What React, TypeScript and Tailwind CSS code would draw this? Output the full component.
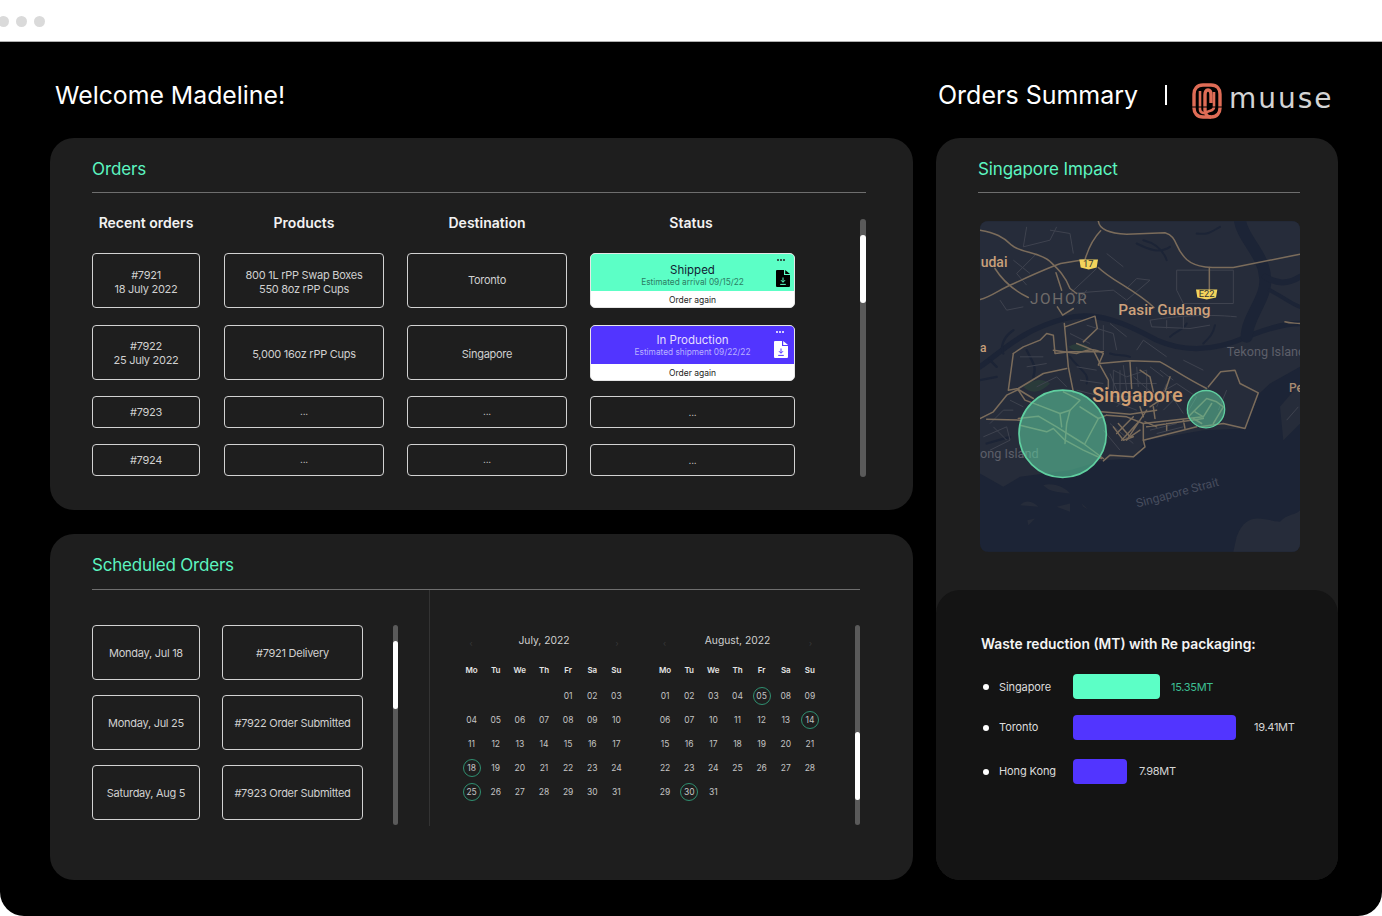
import React from "react";

const FONT = "font-['Inter','Liberation_Sans',sans-serif]";

function Box({ h, className = "", children }: { h: string; className?: string; children?: React.ReactNode }) {
  return (
    <div className={`${h} ${className} flex flex-col items-center justify-center rounded-[4px] border border-[#d2d2d2] text-center text-[11px] leading-[14px] tracking-[-0.27px] text-[#d0d0d0]`}>
      {children}
    </div>
  );
}

function Scrollbar({ w, h, mt, thumb }: { w: string; h: string; mt: string; thumb: string }) {
  return (
    <div className={`${w} ${h} shrink-0 overflow-hidden rounded-full bg-[#5a5a5a]`}>
      <div className={`${mt} ${thumb} w-full rounded-full bg-white`} />
    </div>
  );
}

function FileIcon({ fill, arrow, className }: { fill: string; arrow: string; className: string }) {
  return (
    <svg viewBox="0 0 14 17" className={className}>
      <path d="M0 1a1 1 0 0 1 1-1h7v5h6v11a1 1 0 0 1-1 1H1a1 1 0 0 1-1-1Z" fill={fill} />
      <path d="M9.2 0 14 4H9.2Z" fill={fill} />
      <path d="M7 7.5V12M5 10.2 7 12.3 9 10.2M4.2 14.4H9.8" fill="none" stroke={arrow} strokeWidth="1" />
    </svg>
  );
}

function Dots({ className }: { className: string }) {
  return (
    <div className={`absolute top-[5px] flex gap-[1px] ${className}`}>
      <span className="h-[2px] w-[2px] rounded-full bg-current" />
      <span className="h-[2px] w-[2px] rounded-full bg-current" />
      <span className="h-[2px] w-[2px] rounded-full bg-current" />
    </div>
  );
}

function StatusCard({ title, sub, color, h, tone, subTone, fileFill, arrow, fileClass, dotTone, pad }: {
  title: string; sub: string; color: string; h: string; tone: string; subTone: string; fileFill: string; arrow: string; fileClass: string; dotTone: string; pad: string;
}) {
  return (
    <div className={`relative flex ${h} flex-col overflow-hidden rounded-[5px] border border-[#e6e6e6] bg-white`}>
      <div className={`flex flex-1 flex-col items-center justify-center ${color} ${pad}`}>
        <div className={`text-[11.5px] leading-[13px] ${tone}`}>{title}</div>
        <div className={`text-[8.3px] leading-[11px] ${subTone}`}>{sub}</div>
      </div>
      <div className="flex h-[16px] items-center justify-center pt-[2px] text-[8.5px] text-[#222]">Order again</div>
      <Dots className={dotTone} />
      <FileIcon fill={fileFill} arrow={arrow} className={fileClass} />
    </div>
  );
}

const july = [
  ["", "", "", "", "01", "02", "03"],
  ["04", "05", "06", "07", "08", "09", "10"],
  ["11", "12", "13", "14", "15", "16", "17"],
  ["18", "19", "20", "21", "22", "23", "24"],
  ["25", "26", "27", "28", "29", "30", "31"],
];
const august = [
  ["01", "02", "03", "04", "05", "08", "09"],
  ["06", "07", "10", "11", "12", "13", "14"],
  ["15", "16", "17", "18", "19", "20", "21"],
  ["22", "23", "24", "25", "26", "27", "28"],
  ["29", "30", "31", "", "", "", ""],
];
const days = ["Mo", "Tu", "We", "Th", "Fr", "Sa", "Su"];

function Calendar({ title, rows, marked }: { title: string; rows: string[][]; marked: string[] }) {
  return (
    <div className="w-[169px] shrink-0">
      <div className="flex h-[20px] items-center justify-between px-[10px] text-[10.3px] text-[#d0d0d0]">
        <span className="mt-[4px] text-[8px] text-[#3a3a3a]">‹</span>
        <span>{title}</span>
        <span className="mt-[4px] text-[8px] text-[#3a3a3a]">›</span>
      </div>
      <div className="mt-[9px] grid h-[20px] grid-cols-7 items-center text-center text-[8px] font-semibold text-[#e4e4e4]">
        {days.map((d) => <span key={d}>{d}</span>)}
      </div>
      <div className="mt-[4px] grid grid-cols-7 text-[8.5px] text-[#c4c4c4]">
        {rows.flat().map((d, i) => (
          <div key={i} className="flex h-[24px] items-center justify-center">
            {d && (
              <span className={`flex h-[18px] w-[18px] items-center justify-center rounded-full ${marked.includes(d) ? "border border-[#2f8f70]" : ""}`}>{d}</span>
            )}
          </div>
        ))}
      </div>
    </div>
  );
}

function MapArt() {
  const major = [
    "M385,33 C388,58 420,70 470,72 L585,68 C625,80 610,110 650,148 C680,175 730,173 790,172 L990,132",
    "M718,172 V240",
    "M30,60 C75,68 100,80 125,105 C150,128 205,125 238,152 C262,175 285,195 300,235 L320,250",
    "M392,62 C365,90 352,125 345,148 L272,160 C220,178 165,205 118,226 C90,238 60,262 30,268",
    "M385,172 C425,212 490,235 552,292",
    "M75,175 C100,215 130,240 175,262",
    "M258,188 L275,240",
    "M262,290 L278,315 L310,295 M283,340 L295,470 L310,545",
    "M130,430 L115,540 L145,535 L220,490 L290,475",
    "M130,430 L160,410 L210,390 L230,370 L250,375 L255,430 L300,425 L400,425",
    "M30,625 L70,605 L110,555 L145,538 L190,565",
    "M50,627 L150,630",
    "M320,400 L370,420 L390,460 L480,452 L570,455 C600,470 640,500 710,535",
    "M390,465 L415,510 L415,535",
    "M480,455 L485,535",
    "M510,480 L540,500 L550,545",
    "M285,350 L375,318 L382,355 L340,395",
    "M250,420 L320,430 C350,420 370,410 400,430 L385,465",
    "M395,605 L480,612 L560,600",
    "M410,615 L470,620 L520,640 L700,620",
    "M520,690 L680,650",
    "M520,640 L520,690 L525,710 L490,740 L420,735 L400,752",
    "M440,670 L490,620 M455,690 L510,630 M470,690 L530,600",
    "M430,650 L460,690 L490,680 M445,640 L480,680 L510,660",
    "M530,650 L700,625 M590,640 V660 M640,630 L645,655 M525,635 L560,650",
    "M715,530 L752,485 L795,480 L810,520 L865,548 L825,655 L760,640 L690,650",
    "M600,500 L585,545 M540,590 L570,570 M510,590 L520,620 M550,590 L555,625",
    "M945,335 C960,340 975,338 990,340",
    "M145,540 L165,570 L205,585",
  ];
  const inner = [
    "M145,625 L205,618 L260,650 L340,700 L400,745",
    "M150,645 L230,665 L250,655 L285,690 L340,720 L395,745",
    "M205,585 L270,610 L300,600 L330,570 L280,545",
    "M300,600 L290,640 L285,700",
    "M330,590 L385,625 L345,700",
    "M385,625 L410,615",
    "M270,610 L275,650",
    "M655,620 L710,565 L740,575 L760,590 L730,640",
    "M675,605 L700,620 L725,580 M670,625 L695,640",
  ];
  const minor = [
    "M170,50 L160,110 L240,90 L260,50 M200,130 L140,190 L170,225 M240,60 L300,70 L310,130 M130,150 L180,190 M90,270 L110,300 L160,290",
    "M380,175 L300,250 L430,240 L470,270 L540,210 L500,205 L470,235",
    "M620,180 H790 V280 H640 L620,240 Z M540,330 C600,320 700,310 800,320 M540,330 L545,350 L660,355 L720,345",
    "M590,330 V355 M640,320 V355 M410,130 L460,170 M350,240 L320,280",
    "M350,345 L430,370 L440,420 M400,345 V420 M300,370 L360,400 M420,340 L470,380",
    "M430,480 L470,500 L530,480 L530,560 L430,560 Z M450,480 V580 M430,520 H560 M490,500 L560,560 M570,480 L610,510",
    "M500,420 L520,390 L590,440 M640,450 L700,480 M420,490 L440,540 M460,465 L470,540 M500,470 L505,530 M540,470 L580,500",
    "M550,560 L620,520 L680,560 L650,610 M600,550 L640,610 M590,520 L560,590 M620,560 L580,600",
    "M40,680 L110,650 L120,690 L60,720 M60,640 L100,600 L130,600 M120,570 L160,590 M70,650 L110,690",
    "M200,530 L260,500 L290,530 M170,470 L230,460 M150,440 L220,440 M320,470 L380,480 M330,510 L400,520 M320,540 L400,560",
    "M950,630 L985,590 M770,540 L745,600",
    "M420,640 L490,700 M400,660 L450,720 M540,660 L620,640 M560,670 L640,650",
    "M420,570 L500,600 M440,590 L470,560",
  ];
  return (
    <svg viewBox="30 33 960 992" className="h-[331px] w-[320px] rounded-[8px]" fontFamily="Roboto, sans-serif">
      <rect x="30" y="33" width="960" height="992" fill="#1c2436" />
      <path d="M30,33 H990 V470 L900,520 L868,550 L825,655 L700,660 L530,690 L490,745 L400,750 L300,780 L150,800 L100,830 L30,790 Z" fill="#262c3a" />
      <path d="M800,980 C830,900 880,930 930,935 C950,910 980,915 990,900 V1025 H790 Z" fill="#262c3a" />
      <path d="M150,885 C170,865 190,875 205,890 Z M220,825 C250,815 290,835 300,850 C260,845 240,845 220,825 Z M260,890 L300,880 L300,905 Z M172,930 L195,925 L175,945 Z M335,880 L355,898 L340,890 Z" fill="#262c3a" />
      <path d="M930,590 L990,520 V640 L940,690 Z" fill="#262c3a" />
      <g fill="none" stroke="#1c2436" strokeLinecap="round" strokeLinejoin="round">
        <path d="M30,470 C90,430 150,360 285,325 C380,300 470,340 560,390 C650,430 740,420 830,380 C880,360 940,340 990,340" strokeWidth="16" />
        <path d="M810,33 C820,90 880,130 885,200 C895,260 830,320 830,380" strokeWidth="36" />
        <path d="M990,200 C950,225 920,220 885,200" strokeWidth="18" />
        <path d="M990,290 C960,280 940,260 900,240" strokeWidth="12" />
        <path d="M500,100 C540,120 570,130 600,110 M520,90 C560,100 580,120 590,150 M680,70 C720,75 730,60 750,50 M700,400 C720,380 730,370 735,345 M600,380 C620,360 640,360 650,340" strokeWidth="6" />
        <path d="M170,420 C190,460 200,470 190,500 M60,450 L80,470 M30,510 L80,500 M50,700 L120,680 M130,360 C100,380 90,410 100,430" strokeWidth="7" />
        <path d="M300,440 C330,480 360,490 350,520 M420,430 C450,440 460,430 480,440" strokeWidth="6" />
      </g>
      <path d="M295,410 C320,395 350,400 360,415 C335,425 310,425 295,410 Z M160,530 C190,505 220,505 240,520 C215,545 185,555 160,530 Z" fill="#2a3b3a" />
      <g fill="none" stroke="#3f434f" strokeWidth="3">
        {minor.map((d) => <path key={d} d={d} />)}
      </g>
      <g fill="none" stroke="#7b6c5b" strokeWidth="4.5" strokeLinejoin="round" strokeLinecap="round">
        {major.map((d) => <path key={d} d={d} />)}
        {inner.map((d) => <path key={d} d={d} />)}
      </g>
      <text x="32" y="172" fontSize="42" fontWeight="500" fill="#c9a07a">udai</text>
      <text x="30" y="425" fontSize="36" fontWeight="500" fill="#c9a07a">a</text>
      <text x="180" y="283" fontSize="46" fill="#6f6b69" letterSpacing="5">JOHOR</text>
      <text x="445" y="315" fontSize="46" fontWeight="500" fill="#cda27c">Pasir Gudang</text>
      <text x="770" y="437" fontSize="38" fill="#5d5f69">Tekong Island</text>
      <text x="957" y="545" fontSize="36" fontWeight="500" fill="#a88a70">Pe</text>
      <text x="30" y="745" fontSize="38" fill="#5d5f69">ong Island</text>
      <text x="366" y="575" fontSize="60" fontWeight="500" fill="#d09f72">Singapore</text>
      <text x="502" y="892" fontSize="36" fill="#474d5e" transform="rotate(-15 502 892)">Singapore Strait</text>
      <path d="M328,148 H384 L380,172 L356,178 L332,172 Z" fill="#f2d45c" />
      <text x="355" y="170" fontSize="28" fill="#333" textAnchor="middle">17</text>
      <path d="M678,238 H742 L738,262 L710,268 L682,262 Z" fill="#f2d45c" />
      <text x="710" y="262" fontSize="28" fill="#333" textAnchor="middle">E22</text>
      <circle cx="278" cy="671" r="131" fill="#5fd2a2" fillOpacity="0.55" stroke="#60cfa0" strokeWidth="5" />
      <circle cx="708" cy="597" r="56" fill="#5fd2a2" fillOpacity="0.5" stroke="#60cfa0" strokeWidth="4" />
    </svg>
  );
}

function Logo() {
  return (
    <svg viewBox="0 0 30 36" className="h-[36px] w-[30px]">
      <g fill="none" stroke="#df6c56" strokeWidth="3.4">
        <path d="M11 2H19C25 2 28 6 28 11V25C28 30 25 34 19 34C15 34 13 31 13 27V12C13 9 14 7 16 7C18 7 19 9 19 12V20" />
        <path d="M11 2C5 2 2 6 2 11V25C2 30 5 34 11 34H19" />
        <path d="M8 8V26C8 30 12 31 15 29C19 27 22 28 22 24V9" strokeWidth="2.6" />
      </g>
      <path d="M0 24H30" stroke="#000" strokeWidth="1" />
    </svg>
  );
}

function Bar({ label, bar, width, value, valueTone, gap, shift }: { label: string; bar: string; width: string; value: string; valueTone: string; gap: string; shift: string }) {
  return (
    <div className="flex h-[25px] items-center">
      <span className="ml-[2px] h-[6px] w-[6px] rounded-full bg-white" />
      <span className={`ml-[10px] w-[74px] text-[11px] tracking-[-0.1px] text-[#dcdcdc] ${shift}`}>{label}</span>
      <div className={`${width} h-full rounded-[4px] ${bar}`} />
      <span className={`${gap} text-[11px] tracking-[-0.3px] ${valueTone} ${shift}`}>{value}</span>
    </div>
  );
}

export default function App() {
  return (
    <div className={`flex h-[916px] w-[1382px] flex-col overflow-hidden bg-white ${FONT}`}>
      <div className="flex h-[42px] shrink-0 items-center gap-[7px] border-b border-[#b0b0b0] pt-[2px]">
        <span className="-ml-[2px] h-[11px] w-[11px] rounded-full bg-[#dadada]" />
        <span className="h-[11px] w-[11px] rounded-full bg-[#dadada]" />
        <span className="h-[11px] w-[11px] rounded-full bg-[#dadada]" />
      </div>
      <div className="flex-1 rounded-b-[24px] bg-black">
        <header className="flex h-[96px] items-start pt-[37px] text-white">
          <h1 className="ml-[55px] w-[883px] text-[24.8px] font-normal leading-[32px]">Welcome Madeline!</h1>
          <h2 className="w-[227px] text-[25px] font-normal leading-[32px]">Orders Summary</h2>
          <span className="mt-[6px] h-[20px] w-[2px] bg-white" />
          <div className="ml-[25px] mt-[4px] flex items-center">
            <Logo />
            <span className="ml-[7px] -mt-[5px] text-[28px] font-normal leading-[32px] tracking-[2px] text-[#d4d4d4] font-['DejaVu_Sans',sans-serif]">muuse</span>
          </div>
        </header>
        <div className="flex gap-[23px] pl-[50px]">
          <div className="flex w-[863px] flex-col gap-[24px]">
            <section className="h-[372px] rounded-[24px] bg-[#1e1e1e] pl-[42px] pr-[47px]">
              <div className="h-[55px] border-b border-[#6e6e6e] pt-[18px] text-[17px] leading-[26px] tracking-[-0.1px] text-[#5cf5c0]">Orders</div>
              <div className="flex items-start">
                <div className="w-[703px]">
                  <div className="mt-[19px] flex h-[20px] items-center text-center text-[14px] font-semibold text-[#f2f2f2]">
                    <span className="w-[108px]">Recent orders</span>
                    <span className="ml-[24px] w-[160px]">Products</span>
                    <span className="ml-[23px] w-[160px]">Destination</span>
                    <span className="ml-[23px] w-[202px]">Status</span>
                  </div>
                  <div className="mt-[21px] grid grid-cols-[108px_161px_160px_205px] gap-x-[23px]">
                    <Box h="h-[55px]" className="pt-[3px]"><span>#7921</span><span>18 July 2022</span></Box>
                    <Box h="h-[55px]" className="ml-[1px] pt-[3px]"><span>800 1L rPP Swap Boxes</span><span>550 8oz rPP Cups</span></Box>
                    <Box h="h-[55px]" className="pb-[2px]">Toronto</Box>
                    <StatusCard title="Shipped" sub="Estimated arrival 09/15/22" color="bg-[#5cffc6]" h="h-[55px]" tone="text-[#123]" subTone="text-[#2c7d63]" fileFill="#000" arrow="#5cffc6" fileClass="absolute left-[185px] top-[16px] h-[17px] w-[14px]" dotTone="left-[186px] text-[#222]" pad="pt-[7px]" />
                    <Box h="mt-[17px] h-[55px]" className="pt-[1px]"><span>#7922</span><span>25 July 2022</span></Box>
                    <Box h="mt-[17px] h-[55px]" className="ml-[1px] pt-[2px]">5,000 16oz rPP Cups</Box>
                    <Box h="mt-[17px] h-[55px]" className="pt-[2px]">Singapore</Box>
                    <div className="mt-[17px]">
                      <StatusCard title="In Production" sub="Estimated shipment 09/22/22" color="bg-[#5235ff]" h="h-[56px]" tone="text-[#e4deff]" subTone="text-[#b9b0ff]" fileFill="#fff" arrow="#5235ff" fileClass="absolute left-[183px] top-[15px] h-[17px] w-[14px]" dotTone="left-[185px] text-[#fff]" pad="pt-[1px]" />
                    </div>
                    <Box h="mt-[15px] h-[32px]">#7923</Box>
                    <Box h="mt-[15px] h-[32px]" className="ml-[1px] pb-[3px]"><span className="text-[10px]">...</span></Box>
                    <Box h="mt-[15px] h-[32px]" className="pb-[3px]"><span className="text-[10px]">...</span></Box>
                    <Box h="mt-[15px] h-[32px]"><span className="text-[10px]">...</span></Box>
                    <Box h="mt-[16px] h-[32px]" className="pb-[1px]">#7924</Box>
                    <Box h="mt-[16px] h-[32px]" className="ml-[1px] pb-[3px]"><span className="text-[10px]">...</span></Box>
                    <Box h="mt-[16px] h-[32px]" className="pb-[3px]"><span className="text-[10px]">...</span></Box>
                    <Box h="mt-[16px] h-[32px]"><span className="text-[10px]">...</span></Box>
                  </div>
                </div>
                <div className="ml-[65px] mt-[26px]">
                  <Scrollbar w="w-[6px]" h="h-[258px]" mt="mt-[16px]" thumb="h-[68px]" />
                </div>
              </div>
            </section>
            <section className="h-[346px] rounded-[24px] bg-[#1e1e1e] pl-[42px]">
              <div className="h-[56px] w-[768px] border-b border-[#6e6e6e] pt-[18px] text-[17px] leading-[26px] tracking-[-0.2px] text-[#5cf5c0]">Scheduled Orders</div>
              <div className="flex h-[236px]">
                <div className="flex w-[338px] border-r border-[#333] pt-[35px]">
                  <div className="grid h-fit w-[271px] grid-cols-[108px_141px] gap-x-[22px] gap-y-[15px]">
                    <Box h="h-[55px]" className="pt-[1px]">Monday, Jul 18</Box>
                    <Box h="h-[55px]" className="pt-[1px]">#7921 Delivery</Box>
                    <Box h="h-[55px]" className="pt-[1px]">Monday, Jul 25</Box>
                    <Box h="h-[55px]" className="pt-[1px]">#7922 Order Submitted</Box>
                    <Box h="h-[55px]" className="pt-[1px]">Saturday, Aug 5</Box>
                    <Box h="h-[55px]" className="pt-[1px]">#7923 Order Submitted</Box>
                  </div>
                  <div className="ml-[30px]">
                    <Scrollbar w="w-[5px]" h="h-[200px]" mt="mt-[16px]" thumb="h-[68px]" />
                  </div>
                </div>
                <div className="flex pl-[29.5px] pt-[41px]">
                  <Calendar title="July, 2022" rows={july} marked={["18", "25"]} />
                  <div className="ml-[24.5px]">
                    <Calendar title="August, 2022" rows={august} marked={["05", "14", "30"]} />
                  </div>
                  <div className="-mt-[6px] ml-[33px]">
                    <Scrollbar w="w-[5px]" h="h-[200px]" mt="mt-[107px]" thumb="h-[68px]" />
                  </div>
                </div>
              </div>
            </section>
          </div>
          <section className="flex h-[742px] w-[402px] flex-col overflow-hidden rounded-[24px] bg-[#1e1e1e]">
            <div className="ml-[42px] h-[55px] w-[322px] border-b border-[#6e6e6e] pt-[18px] text-[17px] leading-[26px] tracking-[-0.1px] text-[#5cf5c0]">Singapore Impact</div>
            <div className="ml-[44px] mt-[28px] h-[331px]">
              <MapArt />
            </div>
            <div className="mt-[38px] flex-1 rounded-[24px] bg-[#141414] pl-[45px] pt-[45px]">
              <div className="text-[13.8px] font-semibold leading-[18px] text-[#f4f4f4]">Waste reduction (MT) with Re packaging:</div>
              <div className="mt-[21px]">
                <Bar label="Singapore" bar="bg-[#5cffc6]" width="w-[87px]" value="15.35MT" valueTone="text-[#3cbf93]" gap="ml-[11px]" shift="pt-[1px]" />
              </div>
              <div className="mt-[16px]">
                <Bar label="Toronto" bar="bg-[#5235ff]" width="w-[163px]" value="19.41MT" valueTone="text-[#d4d4d4]" gap="ml-[18px]" shift="pt-0" />
              </div>
              <div className="mt-[19px]">
                <Bar label="Hong Kong" bar="bg-[#5235ff]" width="w-[54px]" value="7.98MT" valueTone="text-[#d4d4d4]" gap="ml-[12px]" shift="pt-0" />
              </div>
            </div>
          </section>
        </div>
      </div>
    </div>
  );
}
